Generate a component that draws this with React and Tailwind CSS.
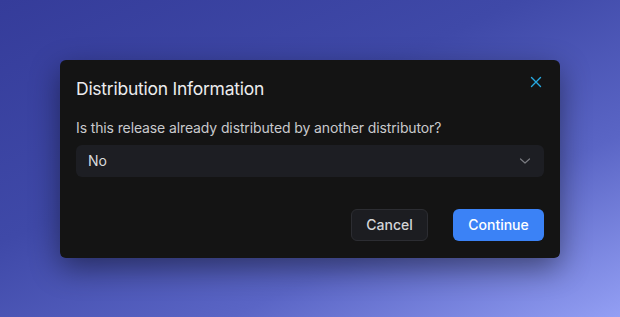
import React, { useState } from 'react';

export default function App() {
  const [value] = useState('No');

  return (
    <div
      className="w-[620px] h-[317px] flex items-center justify-center bg-[linear-gradient(155deg,#353c9a_0%,#3f49a8_40%,#5a65c5_70%,#939ff4_100%)]"
      style={{ fontFamily: 'Inter, "Noto Sans", sans-serif' }}
    >
      <div className="relative w-[500px] rounded-md bg-[#141414] px-4 pt-[18px] pb-[17px] shadow-[0_10px_30px_rgba(0,0,0,0.45)]">
        {/* Close */}
        <button className="absolute right-[18px] top-[16px] w-[12px] h-[12px] text-[#27a9e1]">
          <svg viewBox="0 0 12 12" className="w-[12px] h-[12px]" fill="none" stroke="currentColor" strokeWidth="1.4" strokeLinecap="round">
            <path d="M1.5 1.5 L10.5 10.5 M10.5 1.5 L1.5 10.5" />
          </svg>
        </button>

        {/* Title */}
        <h2 className="text-[17.5px] leading-[22px] font-normal text-[#ececee] tracking-[-0.25px]">
          Distribution Information
        </h2>

        {/* Question */}
        <p className="mt-[19px] text-[14px] leading-[18px] text-[#c9cacd] tracking-[-0.12px]">
          Is this release already distributed by another distributor?
        </p>

        {/* Select */}
        <div className="mt-[8px] h-[32px] rounded-md bg-[#1d1e23] flex items-center justify-between pl-[12px] pr-[13px]">
          <span className="text-[14px] text-[#d9dadc]">{value}</span>
          <svg viewBox="0 0 12 12" className="w-[12px] h-[12px] text-[#7a7b80]" fill="none" stroke="currentColor" strokeWidth="1.2" strokeLinecap="round" strokeLinejoin="round">
            <path d="M1.5 4 L6 8 L10.5 4" />
          </svg>
        </div>

        {/* Actions */}
        <div className="mt-[32px] flex justify-end gap-[25px]">
          <button className="h-[32px] w-[77px] rounded-md bg-[#1c1d21] border border-[#2c2d32] text-[14px] font-medium text-[#d4d5d8]">
            Cancel
          </button>
          <button className="h-[32px] w-[91px] rounded-md bg-[#3b82f6] text-[14px] font-medium text-white">
            Continue
          </button>
        </div>
      </div>
    </div>
  );
}
